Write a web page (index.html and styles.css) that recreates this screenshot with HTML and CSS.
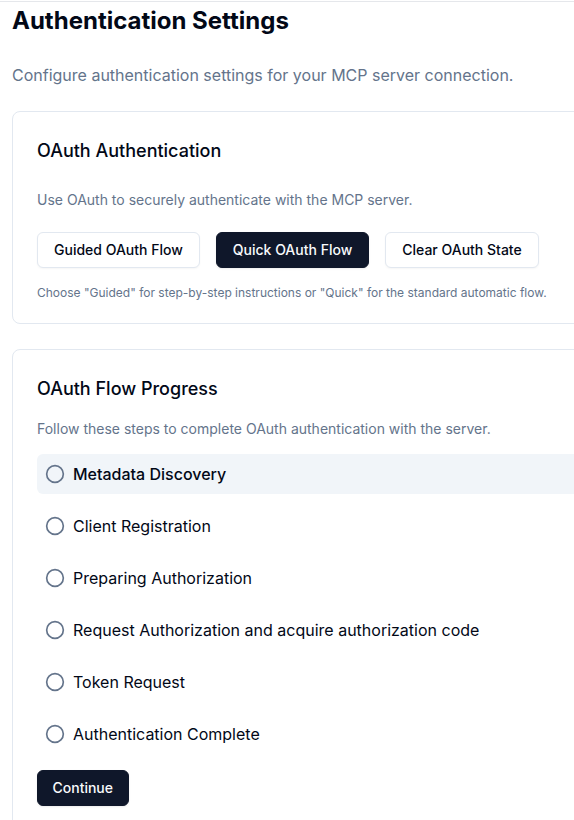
FILE: index.html
```html
<!DOCTYPE html>
<html lang="en">
<head>
<meta charset="utf-8">
<title>Authentication Settings</title>
<link rel="stylesheet" href="styles.css">
</head>
<body>
<div class="frame">
  <div class="page">
    <h1 class="title">Authentication Settings</h1>
    <p class="lead">Configure authentication settings for your MCP server connection.</p>

    <section class="card card-auth">
      <h3 class="card-title">OAuth Authentication</h3>
      <p class="muted desc-auth">Use OAuth to securely authenticate with the MCP server.</p>
      <div class="btn-row">
        <button class="btn btn-outline">Guided OAuth Flow</button>
        <button class="btn btn-dark">Quick OAuth Flow</button>
        <button class="btn btn-outline">Clear OAuth State</button>
      </div>
      <p class="hint">Choose "Guided" for step-by-step instructions or "Quick" for the standard automatic flow.</p>
    </section>

    <section class="card card-flow">
      <h3 class="card-title flow-title">OAuth Flow Progress</h3>
      <p class="muted desc-flow">Follow these steps to complete OAuth authentication with the server.</p>
      <ul class="steps">
        <li class="step step-active">
          <svg class="step-icon" viewBox="0 0 24 24" width="20" height="20"><circle cx="12" cy="12" r="10"/></svg>
          <span>Metadata Discovery</span>
        </li>
        <li class="step">
          <svg class="step-icon" viewBox="0 0 24 24" width="20" height="20"><circle cx="12" cy="12" r="10"/></svg>
          <span>Client Registration</span>
        </li>
        <li class="step">
          <svg class="step-icon" viewBox="0 0 24 24" width="20" height="20"><circle cx="12" cy="12" r="10"/></svg>
          <span>Preparing Authorization</span>
        </li>
        <li class="step">
          <svg class="step-icon" viewBox="0 0 24 24" width="20" height="20"><circle cx="12" cy="12" r="10"/></svg>
          <span>Request Authorization and acquire authorization code</span>
        </li>
        <li class="step">
          <svg class="step-icon" viewBox="0 0 24 24" width="20" height="20"><circle cx="12" cy="12" r="10"/></svg>
          <span>Token Request</span>
        </li>
        <li class="step">
          <svg class="step-icon" viewBox="0 0 24 24" width="20" height="20"><circle cx="12" cy="12" r="10"/></svg>
          <span>Authentication Complete</span>
        </li>
      </ul>
      <button class="btn btn-dark btn-continue">Continue</button>
    </section>
  </div>
</div>
</body>
</html>
```

FILE: styles.css
```css
html, body {
  margin: 0;
  padding: 0;
  overflow: hidden;
  background: #ffffff;
}

body {
  font-family: Inter, "Noto Sans", sans-serif;
  color: #020817;
  padding-top: 1px;
}

.frame {
  border-top: 1px solid #e5e7eb;
}

.page {
  padding: 3px 0 0 12px;
  width: 640px;
}

.title {
  margin: 0 0 26px;
  font-size: 24px;
  line-height: 32px;
  font-weight: 700;
  color: #020817;
}

.lead {
  margin: 0 0 24px;
  font-size: 16px;
  line-height: 24px;
  color: #64748b;
}

.card {
  border: 1px solid #e2e8f0;
  border-radius: 8px;
  background: #ffffff;
  padding: 24px;
}

.card-auth {
  margin-bottom: 25px;
  padding-top: 25px;
  padding-bottom: 22px;
}

.card-flow {
  padding-top: 25px;
}

.card-title {
  margin: 0;
  font-size: 18px;
  line-height: 28px;
  font-weight: 500;
  color: #020817;
}

.muted {
  margin: 0;
  font-size: 14px;
  line-height: 20px;
  color: #64748b;
}

.desc-auth {
  margin-top: 25px;
  margin-bottom: 22px;
}

.btn-row {
  display: flex;
  gap: 16px;
}

.btn {
  font-family: Inter, "Noto Sans", sans-serif;
  font-size: 14px;
  font-weight: 500;
  line-height: 20px;
  height: 36px;
  padding: 0 16px;
  border-radius: 6px;
  cursor: pointer;
}

.btn-outline {
  background: #ffffff;
  color: #020817;
  border: 1px solid #e2e8f0;
  box-shadow: 0 1px 2px rgba(0, 0, 0, 0.04);
}

.btn-dark {
  background: #0f172a;
  color: #f8fafc;
  border: 1px solid #0f172a;
  box-shadow: 0 1px 2px rgba(0, 0, 0, 0.08);
}

.hint {
  margin: 17px 0 0;
  font-size: 12px;
  line-height: 16px;
  color: #64748b;
}

.flow-title {
  margin-bottom: 16px;
}

.desc-flow {
  margin-bottom: 15px;
}

.steps {
  list-style: none;
  margin: 0;
  padding: 0;
  display: flex;
  flex-direction: column;
  gap: 12px;
}

.step {
  display: flex;
  align-items: center;
  gap: 8px;
  height: 40px;
  padding: 0 8px;
  border-radius: 6px;
  font-size: 16px;
  line-height: 24px;
  color: #020817;
}

.step-active {
  background: #f1f5f9;
  font-weight: 500;
}

.step-icon {
  flex: none;
  fill: none;
  stroke: #64748b;
  stroke-width: 2;
}

.btn-continue {
  margin-top: 16px;
  padding: 0 14.5px;
}
```
